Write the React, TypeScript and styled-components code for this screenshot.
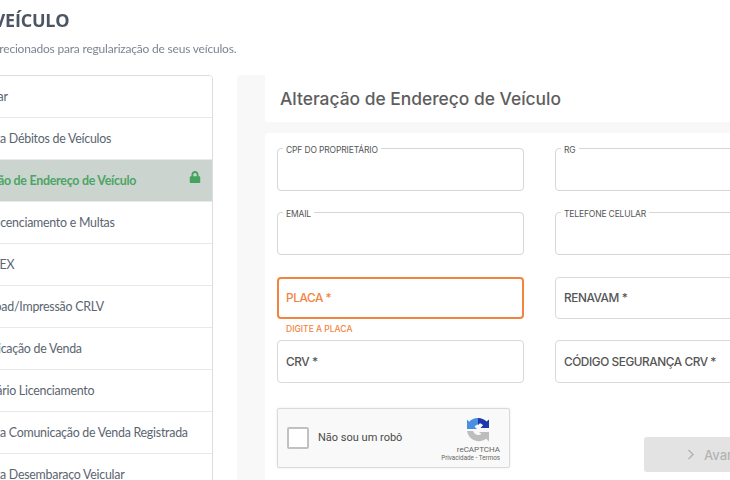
import React from "react";
import styled, { createGlobalStyle } from "styled-components";
import { FaLock } from "react-icons/fa";

const Global = createGlobalStyle`
  html, body { margin: 0; padding: 0; background: #fff; overflow: hidden; }
  * { box-sizing: border-box; }
`;

const Viewport = styled.div`
  width: 730px;
  height: 480px;
  overflow: hidden;
  background: #fff;
`;
const Page = styled.div`
  width: 1100px;
  margin-left: -60px;
  padding-top: 9px;
  filter: blur(0.3px);
`;
const Title = styled.h1`
  margin: 0;
  padding-left: 9px;
  height: 23px;
  font: 700 18px/23px "Open Sans", sans-serif;
  color: #4b5563;
  letter-spacing: -0.2px;
`;
const Subtitle = styled.p`
  margin: 8px 0 0;
  padding-left: 5px;
  height: 18px;
  font: 400 12px/18px "Lato", sans-serif;
  letter-spacing: -0.2px;
  color: #7d8593;
`;
const Main = styled.div`
  display: flex;
  gap: 24px;
  margin-top: 17px;
  align-items: flex-start;
`;
const Menu = styled.nav`
  width: 273px;
  flex: none;
  border: 1px solid #ddd;
  border-radius: 4px;
  overflow: hidden;
`;
const MenuItem = styled.div<{ $active?: boolean }>`
  height: 42px;
  padding: 0 11px 0 19px;
  display: flex;
  align-items: center;
  justify-content: space-between;
  border-bottom: 1px solid #e8e8e8;
  background: ${(p) => (p.$active ? "#ccd4cf" : "#fff")};
  color: ${(p) => (p.$active ? "#4aa564" : "#5b6470")};
  font: ${(p) => (p.$active ? 700 : 400)} 12.4px/20px "Lato", sans-serif;
  letter-spacing: -0.25px;
  white-space: nowrap;
  svg { margin-top: -7px; color: #45a35f; }
`;
const Panel = styled.section`
  width: 600px;
  height: 420px;
  flex: none;
  background: #f8f8f8;
  border-radius: 4px;
  padding-left: 28px;
`;
const PanelHead = styled.header`
  height: 47px;
  background: #fff;
  padding-left: 15px;
  font: 500 17.4px/47px "Inter", sans-serif;
  color: #5e5e5e;
`;
const Card = styled.div`
  margin-top: 11px;
  background: #fff;
  border-radius: 4px 0 0 0;
  padding: 15px 12px 0;
  height: 360px;
`;
const Grid = styled.div`
  display: grid;
  grid-template-columns: 247px 247px;
  column-gap: 31px;
  align-items: start;
`;
const LegendField = styled.fieldset<{ $lower?: boolean }>`
  margin: -5px 0 ${(p) => (p.$lower ? 22 : 21)}px;
  padding: 0;
  height: 48px;
  min-width: 0;
  border: 1px solid #d6d6d6;
  border-radius: 4px;
`;
const Legend = styled.legend`
  margin-left: 5px;
  padding: 0 3px;
  height: 10px;
  font: 400 8.5px/14px "Inter", sans-serif;
  letter-spacing: -0.15px;
  color: #555;
`;
const InputField = styled.div<{ $error?: boolean; $gap: number; $tall?: boolean }>`
  height: ${(p) => (p.$tall ? 43 : 42)}px;
  margin-bottom: ${(p) => p.$gap}px;
  padding-left: ${(p) => (p.$error ? 7 : 8)}px;
  display: flex;
  align-items: center;
  border: ${(p) => (p.$error ? "2px solid #f2843f" : "1px solid #d9d9d9")};
  border-radius: 4px;
  font: 500 11.8px/16px "Inter", sans-serif;
  letter-spacing: -0.42px;
  color: ${(p) => (p.$error ? "#f2843f" : "#555")};
`;
const ErrorWrap = styled.div`
  height: 63px;
`;
const ErrorText = styled.div`
  margin-top: 4px;
  padding-left: 9px;
  font: 500 8.5px/12px "Inter", sans-serif;
  color: #f2843f;
`;
const Footer = styled.div`
  display: flex;
  align-items: flex-start;
  margin-top: 25px;
`;
const Captcha = styled.div`
  width: 233px;
  height: 60px;
  flex: none;
  display: flex;
  align-items: center;
  padding: 0 9px;
  background: #f9f9f9;
  border: 1px solid #d9d9d9;
  border-radius: 2px;
  box-shadow: 0 0 3px rgba(0, 0, 0, 0.08);
`;
const CheckBox = styled.div`
  width: 22px;
  height: 22px;
  flex: none;
  background: #fff;
  border: 2px solid #c1c1c1;
  border-radius: 2px;
`;
const CaptchaLabel = styled.span`
  margin-left: 9px;
  flex: 1;
  font: 400 11px/14px "Roboto", sans-serif;
  color: #4a4a4a;
`;
const CaptchaBrand = styled.div`
  display: flex;
  flex-direction: column;
  align-items: flex-end;
  margin-top: 5px;
  font-family: "Roboto", sans-serif;
  color: #666;
  svg { margin: 0 10px 3px 0; }
`;
const BrandName = styled.div`
  font-size: 8px;
  line-height: 9px;
`;
const BrandLinks = styled.div`
  font-size: 6.3px;
  line-height: 9px;
  white-space: nowrap;
`;
const NextButton = styled.button`
  margin: 29px 0 0 134px;
  width: 160px;
  height: 35px;
  flex: none;
  display: flex;
  align-items: center;
  gap: 9px;
  padding: 0 0 0 43px;
  background: #e3e3e3;
  border: 0;
  border-radius: 3px;
  font: 500 13px/16px "Inter", sans-serif;
  color: #b4b4b4;
`;

const items = [
  "Emplacar",
  "Consulta Débitos de Veículos",
  "Alteração de Endereço de Veículo",
  "IPVA, Licenciamento e Multas",
  "DENATEX",
  "Download/Impressão CRLV",
  "Comunicação de Venda",
  "Calendário Licenciamento",
  "Consulta Comunicação de Venda Registrada",
  "Consulta Desembaraço Veicular",
];

export default function App() {
  return (
    <Viewport>
      <Global />
      <Page>
        <Title>MEU VEÍCULO</Title>
        <Subtitle>Serviços direcionados para regularização de seus veículos.</Subtitle>
        <Main>
          <Menu>
            {items.map((t, i) => (
              <MenuItem key={t} $active={i === 2}>
                <span>{t}</span>
                {i === 2 && <FaLock size={12} />}
              </MenuItem>
            ))}
          </Menu>
          <Panel>
            <PanelHead>Alteração de Endereço de Veículo</PanelHead>
            <Card>
              <Grid>
                <LegendField>
                  <Legend>CPF DO PROPRIETÁRIO</Legend>
                </LegendField>
                <LegendField>
                  <Legend>RG</Legend>
                </LegendField>
                <LegendField $lower>
                  <Legend>EMAIL</Legend>
                </LegendField>
                <LegendField $lower>
                  <Legend>TELEFONE CELULAR</Legend>
                </LegendField>
                <ErrorWrap>
                  <InputField $error $gap={0}>PLACA *</InputField>
                  <ErrorText>DIGITE A PLACA</ErrorText>
                </ErrorWrap>
                <InputField $gap={21}>RENAVAM *</InputField>
                <InputField $gap={0} $tall>CRV *</InputField>
                <InputField $gap={0} $tall>CÓDIGO SEGURANÇA CRV *</InputField>
              </Grid>
              <Footer>
                <Captcha>
                  <CheckBox />
                  <CaptchaLabel>Não sou um robô</CaptchaLabel>
                  <CaptchaBrand>
                    <svg width="24" height="24" viewBox="0 0 24 24">
                      <path d="M12 0a12 12 0 0 1 8.6 3.6L23 1.5V10h-8.5l2.6-2.8A7.5 7.5 0 0 0 14 5.2L12 7z" fill="#1c3aa9" />
                      <path d="M12 0v6.5a6 6 0 0 0-3.5 2L11 11H1V1.5l2.2 2.2A12 12 0 0 1 12 0z" fill="#4a90e2" />
                      <path d="M1 13h6a5.5 5.5 0 0 0 8.5 3L13 14h10v9.5l-2.8-2.8A12 12 0 0 1 1 13z" fill="#bdbdbd" />
                    </svg>
                    <BrandName>reCAPTCHA</BrandName>
                    <BrandLinks>Privacidade - Termos</BrandLinks>
                  </CaptchaBrand>
                </Captcha>
                <NextButton>
                  <svg width="8" height="11" viewBox="0 0 8 11" fill="none" stroke="#b4b4b4" strokeWidth="1.5">
                    <path d="M1.5 1l4.5 4.5L1.5 10" />
                  </svg>
                  Avançar
                </NextButton>
              </Footer>
            </Card>
          </Panel>
        </Main>
      </Page>
    </Viewport>
  );
}
